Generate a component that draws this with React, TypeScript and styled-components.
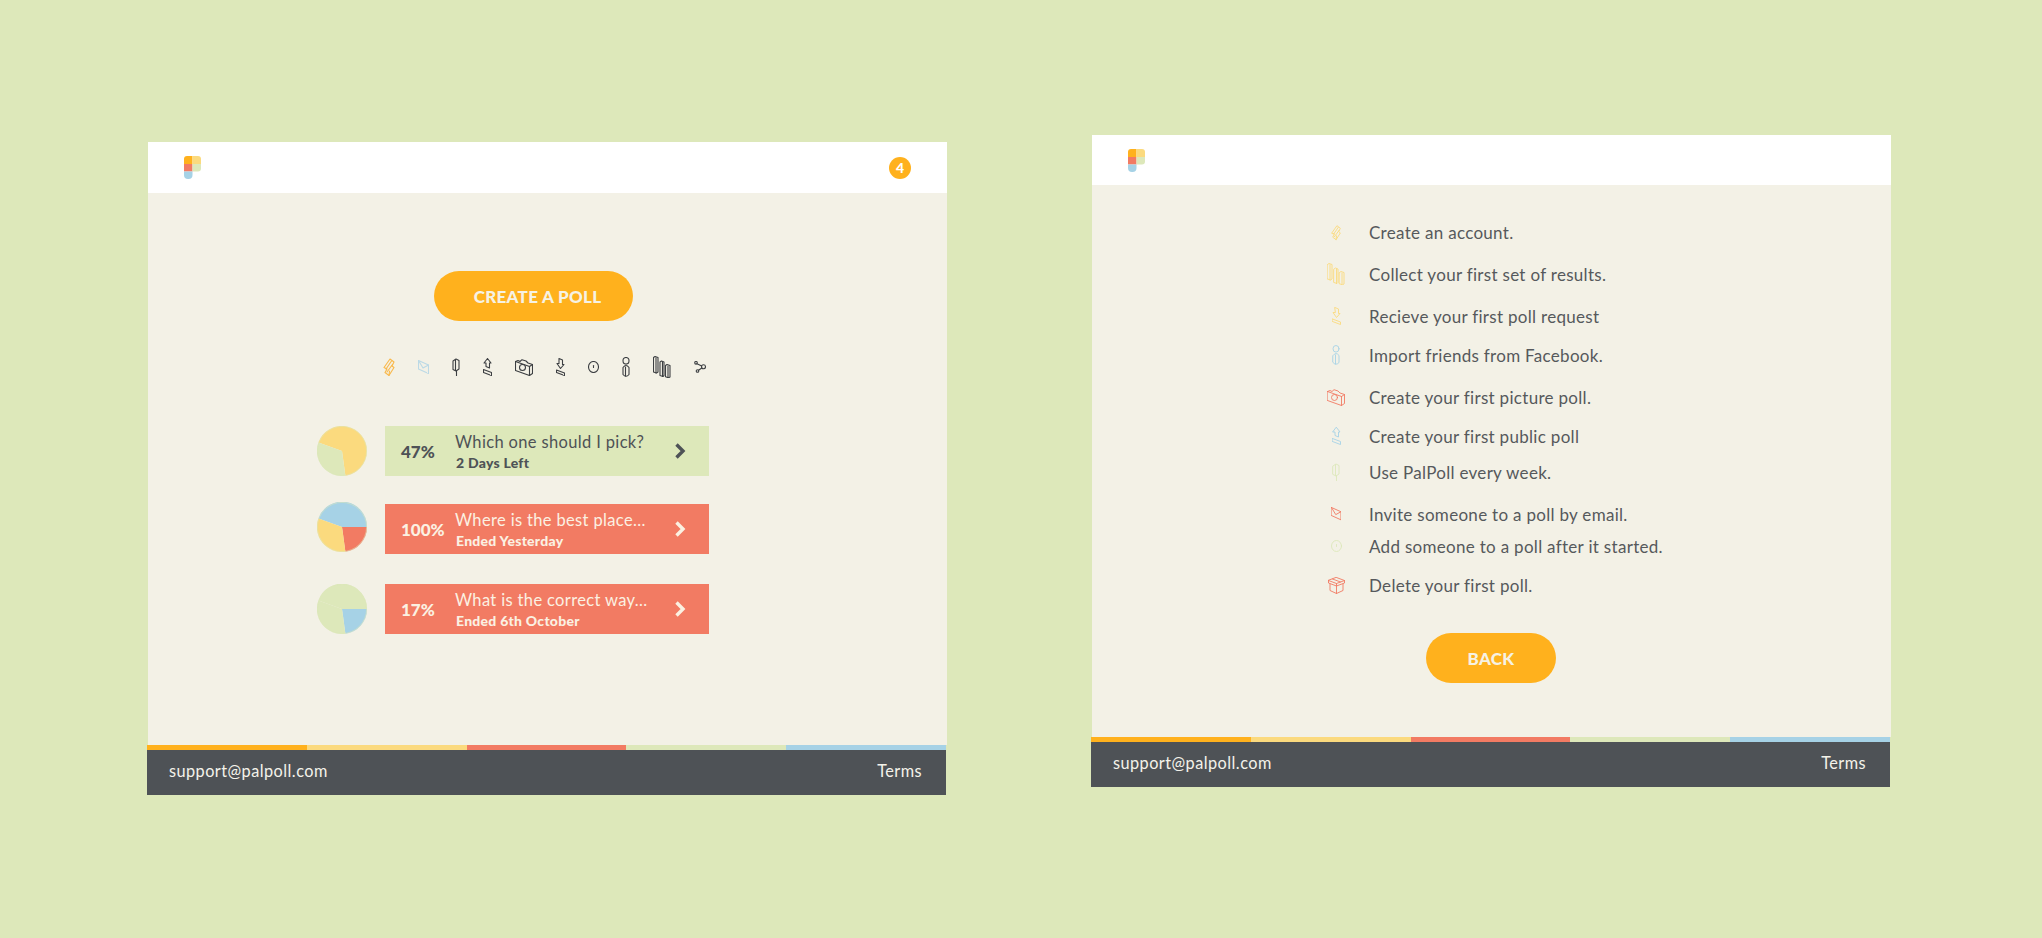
import React from "react";
import styled, { createGlobalStyle } from "styled-components";

const ORANGE = "#FFB11D";
const YELLOW = "#FBDA7E";
const RED = "#F27B63";
const GREEN = "#DDE8BA";
const BLUE = "#A6D2E6";
const DARK = "#4E5256";
const CREAM = "#F3F1E6";

const Global = createGlobalStyle`
  html, body { margin: 0; padding: 0; background: ${GREEN}; overflow: hidden; }
  * { box-sizing: border-box; }
  body { font-family: "Lato", "Liberation Sans", sans-serif; }
`;

const Page = styled.div`
  display: flex;
  align-items: flex-start;
  gap: 144px;
  padding-left: 147px;
  height: 938px;
  background: ${GREEN};
`;

const Card = styled.section<{ $top: number; $height: number }>`
  width: 800px;
  height: ${(p) => p.$height}px;
  margin-top: ${(p) => p.$top}px;
  display: flex;
  flex-direction: column;
`;

const Header = styled.header<{ $height: number }>`
  height: ${(p) => p.$height}px;
  margin-left: 1px;
  background: #fff;
  display: flex;
  align-items: center;
  justify-content: space-between;
  padding: 0 36px;
  flex: none;
`;

const Badge = styled.span`
  width: 22px;
  height: 22px;
  border-radius: 50%;
  background: ${ORANGE};
  color: #fff;
  font-size: 14px;
  font-weight: 900;
  display: flex;
  align-items: center;
  justify-content: center;
`;

const Body = styled.main`
  flex: 1;
  margin-left: 1px;
  background: ${CREAM};
  display: flex;
  flex-direction: column;
  align-items: flex-start;
`;

const PillButton = styled.button<{ $width: number; $top: number; $left: number }>`
  width: ${(p) => p.$width}px;
  height: 50px;
  margin-top: ${(p) => p.$top}px;
  margin-left: ${(p) => p.$left}px;
  border: 0;
  border-radius: 25px;
  background: ${ORANGE};
  color: #f6f2e4;
  font-family: "Lato", sans-serif;
  font-size: 17px;
  font-weight: 900;
  letter-spacing: 0.3px;
  display: flex;
  align-items: center;
  justify-content: center;
  padding: 0 0 0 ${(p) => (p.$width > 150 ? 8 : 0)}px;
`;

const IconStrip = styled.div`
  display: flex;
  align-items: center;
  gap: 23px;
  height: 22px;
  margin: 35px 0 48px 235px;
`;

const PollList = styled.div`
  margin-left: 169px;
  display: flex;
  flex-direction: column;
`;

const PollRow = styled.div<{ $top: number; $drop: number }>`
  display: flex;
  align-items: flex-start;
  gap: 18px;
  margin-top: ${(p) => p.$top}px;
  & > a { margin-top: ${(p) => p.$drop}px; }
`;

const PollBar = styled.a<{ $ended: boolean }>`
  width: 324px;
  height: 50px;
  display: flex;
  align-items: center;
  padding: 0 23px 0 16px;
  background: ${(p) => (p.$ended ? RED : GREEN)};
  color: ${(p) => (p.$ended ? "#FBF1E2" : DARK)};
`;

const Percent = styled.span`
  width: 54px;
  flex: none;
  font-size: 17px;
  font-weight: 900;
`;

const PollText = styled.div`
  flex: 1;
  display: flex;
  flex-direction: column;
  gap: 3px;
`;

const PollTitle = styled.span`
  font-size: 16.5px;
  line-height: 20px;
  letter-spacing: 0.35px;
`;

const PollSub = styled.span`
  font-size: 14px;
  line-height: 16px;
  font-weight: 900;
  letter-spacing: 0.25px;
  margin-left: 1px;
`;

const AchievementList = styled.ul`
  list-style: none;
  margin: 35px 0 0 224px;
  padding: 0;
`;

const Achievement = styled.li<{ $gap: number }>`
  display: flex;
  align-items: center;
  height: 24px;
  margin-top: ${(p) => p.$gap}px;
`;

const IconSlot = styled.span`
  width: 40px;
  margin-right: 13px;
  flex: none;
  display: flex;
  justify-content: center;
  align-items: center;
`;

const AchievementText = styled.span`
  color: #56595c;
  font-size: 17px;
  letter-spacing: 0.3px;
  white-space: nowrap;
`;

const Stripe = styled.div`
  display: flex;
  height: 5px;
  flex: none;
  margin-right: 1px;
`;

const StripeBit = styled.span<{ $color: string }>`
  flex: 1;
  background: ${(p) => p.$color};
`;

const Footer = styled.footer`
  height: 45px;
  flex: none;
  margin-right: 1px;
  background: ${DARK};
  color: #f4f2ea;
  display: flex;
  align-items: center;
  justify-content: space-between;
  padding: 0 24px 4px 22px;
  font-size: 16.3px;
  letter-spacing: 0.45px;
`;

const Logo = () => (
  <svg width="17" height="23" viewBox="0 0 17 23" aria-label="PalPoll">
    <path d="M3 0H8.500V8H0V3a3 3 0 0 1 3-3Z" fill={ORANGE} />
    <path d="M8.500 0H14a3 3 0 0 1 3 3v5H8.500Z" fill={YELLOW} />
    <rect x="0" y="8" width="8.500" height="7.500" fill={RED} />
    <path d="M8.500 8H17v4.500a3 3 0 0 1-3 3H8.500Z" fill={GREEN} />
    <path d="M0 15.500h8.500V19a4 4 0 0 1-4 4h-.5a4 4 0 0 1-4-4Z" fill={BLUE} />
  </svg>
);

type IconName = "bolt" | "mail" | "pin" | "up" | "camera" | "down" | "clock" | "person" | "bars" | "share" | "box";

const ICONS: Record<IconName, { w: number; h: number; body: React.ReactNode }> = {
  bolt: {
    w: 12,
    h: 20,
    body: (
      <>
        <path d="M1 10.500 7 2 11 5 9 9 11 10.500 6 18.500 2 15.500 4 12Z" />
        <path d="M3 12 8.500 4M4 15 9.500 7.500M6 18.500 6.500 14" />
      </>
    ),
  },
  mail: {
    w: 11,
    h: 14,
    body: (
      <>
        <path d="M.5.5 10.500 5v8.500L.5 9Z" />
        <path d="M.5.5 5 8l5.500-3" />
      </>
    ),
  },
  pin: {
    w: 8,
    h: 18,
    body: (
      <>
        <path d="M1 3 4 1l3 1.500V11l-3 2-3-1.500Z" />
        <path d="M3.500 2V12.500M4.500 13v5" />
      </>
    ),
  },
  up: {
    w: 9,
    h: 18,
    body: (
      <>
        <path d="M4.500.5 8 5H6.500v5L3 8.500V5H1Z" />
        <path d="M.5 11.500 8.500 14.500V17.500L.5 14.500Z" />
      </>
    ),
  },
  down: {
    w: 9,
    h: 18,
    body: (
      <>
        <path d="M3 .5 6.500 2V6.500H8L4.500 10.500 1 5.500H3Z" />
        <path d="M.5 12 8.500 15V17.500L.5 14.500Z" />
      </>
    ),
  },
  camera: {
    w: 18,
    h: 17,
    body: (
      <>
        <path d="M.5 2.500 3 1.500 5 2.500 7 .7 11 2 13 4 17.500 5.500V14.500L14.500 16.500.5 11.500Z" />
        <circle cx="7.500" cy="8.500" r="3" />
        <path d="M14.500 7.500V16.500M14.500 7.500 17.500 5.500M.5 2.500 14.500 7.500" />
      </>
    ),
  },
  clock: {
    w: 11,
    h: 12,
    body: (
      <>
        <ellipse cx="5.500" cy="6" rx="5" ry="5.500" />
        <path d="M5.500 4.500v2" />
      </>
    ),
  },
  person: {
    w: 8,
    h: 20,
    body: (
      <>
        <ellipse cx="4" cy="3.800" rx="3" ry="3.300" />
        <path d="M1 10.500Q4 6.500 7 10.500V17.500Q4 21 1 17.500Z" />
        <path d="M3.500 10V19" />
      </>
    ),
  },
  bars: {
    w: 18,
    h: 22,
    body: (
      <>
        <path d="M.5 1.500 2 .5 5 1.500V16L3.500 17 .5 16Z" />
        <path d="M7 6 8.500 5 11 6V19.500L10 20.500 7 19.500Z" />
        <path d="M12.500 9.500 14 8.500 17 9.500V21L15.500 21.800 12.500 20.800Z" />
        <path d="M3 1.800V17M9.500 6.200V20.500M15 10V21.500" />
      </>
    ),
  },
  share: {
    w: 12,
    h: 12,
    body: (
      <>
        <circle cx="2" cy="1.800" r="1.300" />
        <circle cx="9.500" cy="5.800" r="2" />
        <circle cx="3.500" cy="10" r="1.300" />
        <path d="M3 2.800 7.700 5M7.800 7 4.500 9.300" />
      </>
    ),
  },
  box: {
    w: 17,
    h: 17,
    body: (
      <>
        <path d="M8.500.5 16.500 3.500 8.500 6.500.5 3.500Z" />
        <path d="M.5 3.500V6L8.500 9 16.500 6V3.500M8.500 6.500V16.500M2 7V13.500L8.500 16.500 15 13.500V7M4.500 2 12.500 5" />
      </>
    ),
  },
};

const Icon = ({ name, color, scale = 1, weight = 0.9 }: { name: IconName; color: string; scale?: number; weight?: number }) => {
  const def = ICONS[name];
  return (
    <svg
      width={def.w * scale}
      height={def.h * scale}
      viewBox={`0 0 ${def.w} ${def.h}`}
      fill="none"
      stroke={color}
      strokeWidth={weight / scale}
      strokeLinejoin="round"
      strokeLinecap="round"
    >
      {def.body}
    </svg>
  );
};

const UL = "1.400 16.400";
const BOTTOM = "28.400 49.700";
const RIGHT = "50 25";
const slice = (from: string, to: string) => `M25 25L${from}A25 25 0 0 1 ${to}Z`;
const wrap = (from: string, to: string) => `M25 25L${from}A25 25 0 1 1 ${to}Z`;

const PieSvg = styled.svg`
  flex: none;
`;

const Pie = ({ slices }: { slices: { d: string; fill: string }[] }) => (
  <PieSvg width="50" height="50" viewBox="0 0 50 50">
    {slices.map((s) => (
      <path key={s.d} d={s.d} fill={s.fill} />
    ))}
    <circle cx="25" cy="25" r="24.600" fill="none" stroke={GREEN} strokeWidth="0.800" opacity="0.7" />
  </PieSvg>
);

const polls = [
  {
    pct: "47%",
    title: "Which one should I pick?",
    sub: "2 Days Left",
    ended: false,
    top: 0,
    drop: 0,
    slices: [
      { d: wrap(UL, BOTTOM), fill: YELLOW },
      { d: slice(BOTTOM, UL), fill: GREEN },
    ],
  },
  {
    pct: "100%",
    title: "Where is the best place...",
    sub: "Ended Yesterday",
    ended: true,
    top: 26,
    drop: 2,
    slices: [
      { d: slice(UL, RIGHT), fill: BLUE },
      { d: slice(RIGHT, BOTTOM), fill: RED },
      { d: slice(BOTTOM, UL), fill: YELLOW },
    ],
  },
  {
    pct: "17%",
    title: "What is the correct way...",
    sub: "Ended 6th October",
    ended: true,
    top: 30,
    drop: 0,
    slices: [
      { d: slice(UL, RIGHT), fill: GREEN },
      { d: slice(RIGHT, BOTTOM), fill: BLUE },
      { d: slice(BOTTOM, UL), fill: GREEN },
    ],
  },
];

const strip: { name: IconName; color: string }[] = [
  { name: "bolt", color: "#F9B84A" },
  { name: "mail", color: "#BBD9E6" },
  { name: "pin", color: "#3c3f42" },
  { name: "up", color: "#3c3f42" },
  { name: "camera", color: "#3c3f42" },
  { name: "down", color: "#3c3f42" },
  { name: "clock", color: "#3c3f42" },
  { name: "person", color: "#3c3f42" },
  { name: "bars", color: "#3c3f42" },
  { name: "share", color: "#3c3f42" },
];

const achievements: { text: string; icon: IconName; color: string; gap: number; scale?: number }[] = [
  { text: "Create an account.", icon: "bolt", color: YELLOW, gap: 0, scale: 0.85 },
  { text: "Collect your first set of results.", icon: "bars", color: YELLOW, gap: 18 },
  { text: "Recieve your first poll request", icon: "down", color: YELLOW, gap: 18 },
  { text: "Import friends from Facebook.", icon: "person", color: BLUE, gap: 15 },
  { text: "Create your first picture poll.", icon: "camera", color: RED, gap: 18 },
  { text: "Create your first public poll", icon: "up", color: BLUE, gap: 15 },
  { text: "Use PalPoll every week.", icon: "pin", color: GREEN, gap: 12 },
  { text: "Invite someone to a poll by email.", icon: "mail", color: RED, gap: 18, scale: 0.95 },
  { text: "Add someone to a poll after it started.", icon: "clock", color: GREEN, gap: 8 },
  { text: "Delete your first poll.", icon: "box", color: RED, gap: 15 },
];

const stripes = [ORANGE, YELLOW, RED, GREEN, BLUE];

const CardFooter = () => (
  <>
    <Stripe>
      {stripes.map((c) => (
        <StripeBit key={c} $color={c} />
      ))}
    </Stripe>
    <Footer>
      <span>support@palpoll.com</span>
      <span>Terms</span>
    </Footer>
  </>
);

const Chevron = ({ color }: { color: string }) => (
  <svg width="12" height="16" viewBox="0 0 12 16" fill="none" stroke={color} strokeWidth="3.400">
    <path d="M2.500 1.500 9 8 2.500 14.500" />
  </svg>
);

export default function App() {
  return (
    <Page>
      <Global />
      <Card $top={142} $height={653}>
        <Header $height={51}>
          <Logo />
          <Badge>4</Badge>
        </Header>
        <Body>
          <PillButton $width={199} $top={78} $left={286}>CREATE A POLL</PillButton>
          <IconStrip>
            {strip.map((i) => (
              <Icon key={i.name} name={i.name} color={i.color} weight={1.1} />
            ))}
          </IconStrip>
          <PollList>
            {polls.map((p) => (
              <PollRow key={p.pct} $top={p.top} $drop={p.drop}>
                <Pie slices={p.slices} />
                <PollBar $ended={p.ended}>
                  <Percent>{p.pct}</Percent>
                  <PollText>
                    <PollTitle>{p.title}</PollTitle>
                    <PollSub>{p.sub}</PollSub>
                  </PollText>
                  <Chevron color={p.ended ? "#FBF1E2" : DARK} />
                </PollBar>
              </PollRow>
            ))}
          </PollList>
        </Body>
        <CardFooter />
      </Card>
      <Card $top={135} $height={652}>
        <Header $height={50}>
          <Logo />
        </Header>
        <Body>
          <AchievementList>
            {achievements.map((a) => (
              <Achievement key={a.text} $gap={a.gap}>
                <IconSlot>
                  <Icon name={a.icon} color={a.color} scale={a.scale} />
                </IconSlot>
                <AchievementText>{a.text}</AchievementText>
              </Achievement>
            ))}
          </AchievementList>
          <PillButton $width={130} $top={36} $left={334}>BACK</PillButton>
        </Body>
        <CardFooter />
      </Card>
    </Page>
  );
}
